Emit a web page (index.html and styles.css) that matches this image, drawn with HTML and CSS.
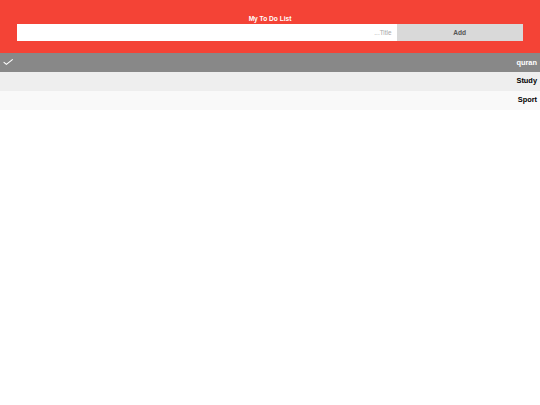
FILE: index.html
```html
<!DOCTYPE html>
<html lang="en">
<head>
<meta charset="utf-8">
<title>My To Do List</title>
<link rel="stylesheet" href="styles.css">
</head>
<body>
<div class="header">
  <h2 class="title">My To Do List</h2>
  <div class="form-row">
    <input class="todo-input" type="text" dir="rtl" placeholder="Title...">
    <span class="add-btn">Add</span>
  </div>
</div>
<ul class="todo-list">
  <li class="todo-item checked">
    <svg class="check" width="14" height="19" viewBox="0 0 14 19"><polyline points="4,9.3 6.4,11.4 12.4,6.6" fill="none" stroke="#fff" stroke-width="1.1" stroke-linecap="round" stroke-linejoin="round"/></svg>
    <span class="item-text">quran</span>
  </li>
  <li class="todo-item odd"><span class="item-text">Study</span></li>
  <li class="todo-item even"><span class="item-text">Sport</span></li>
</ul>
</body>
</html>
```
FILE: styles.css
```css
* { box-sizing: border-box; }
html, body { margin: 0; padding: 0; background: #fff; }
body { font-family: "Liberation Sans", Arial, sans-serif; }

.header {
  background: #f44336;
  height: 53px;
  padding: 14.5px 17px 0;
  color: #fff;
  text-align: center;
}
.title {
  margin: 0 0 1.6px;
  font-size: 6.6px;
  line-height: 7.6px;
  font-weight: bold;
}
.form-row {
  display: flex;
  height: 17px;
}
.todo-input {
  width: 75%;
  height: 17px;
  margin: 0;
  border: none;
  outline: none;
  background: #fff;
  padding: 0 5px;
  font-family: "Liberation Sans", Arial, sans-serif;
  font-size: 6.4px;
  text-align: right;
}
.todo-input::placeholder { color: #a9a9a9; }
.add-btn {
  width: 25%;
  height: 17px;
  background: #d9d9d9;
  color: #555;
  font-size: 6.6px;
  font-weight: bold;
  display: flex;
  align-items: center;
  justify-content: center;
}

.todo-list {
  list-style: none;
  margin: 0;
  padding: 0;
}
.todo-item {
  position: relative;
  height: 18.9px;
  padding: 5.6px 3px 0 0;
  display: flex;
  justify-content: flex-end;
  font-size: 7.4px;
  line-height: 8px;
  font-weight: bold;
  color: #000;
}
.todo-item.odd { background: #eee; }
.todo-item.even { background: #f9f9f9; }
.todo-item.checked { background: #888; color: #fff; }
.check {
  position: absolute;
  left: 0;
  top: 0;
}
```
